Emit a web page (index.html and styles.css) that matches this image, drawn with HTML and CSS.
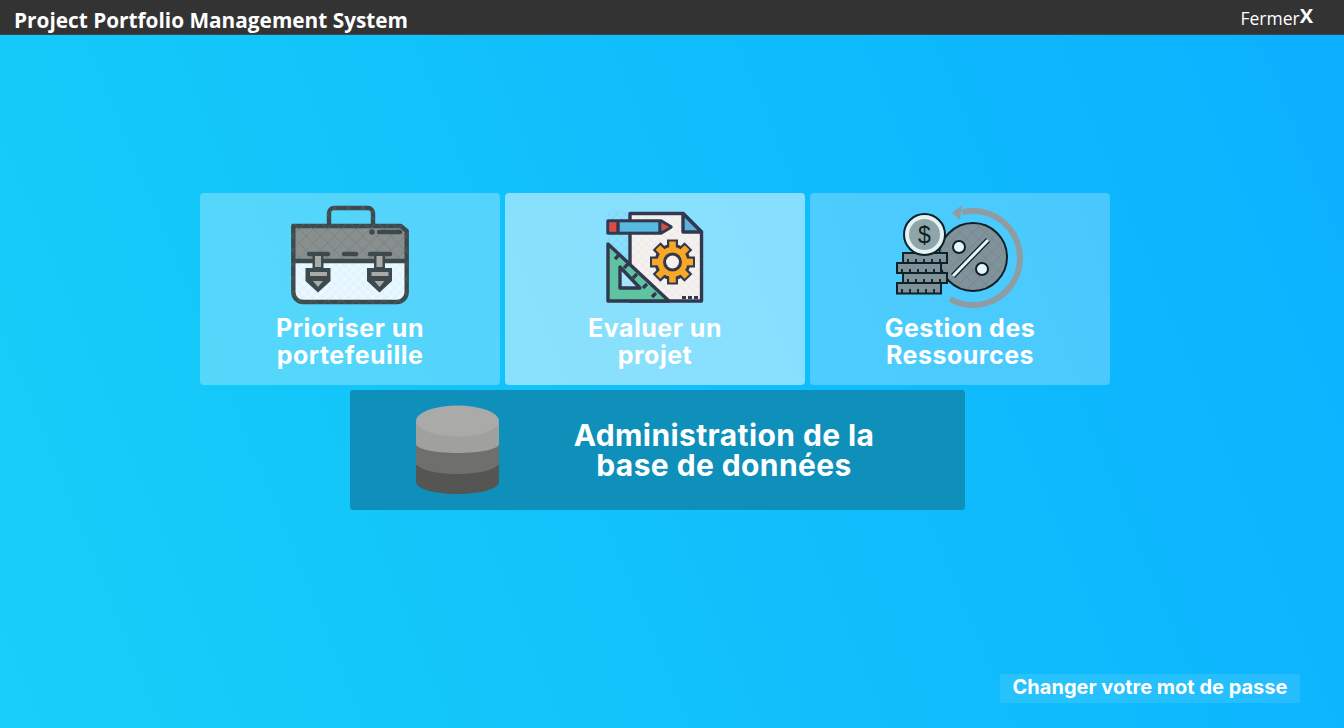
FILE: index.html
```html
<!DOCTYPE html>
<html lang="fr">
<head>
<meta charset="utf-8">
<title>Project Portfolio Management System</title>
<link rel="stylesheet" href="styles.css">
</head>
<body>
<header class="topbar">
  <h1 class="app-title">Project Portfolio Management System</h1>
  <a class="close-link" href="#">Fermer<b class="close-x">X</b></a>
</header>
<main class="content">
  <div class="tiles">
    <a class="tile tile-a" href="#">
      <svg class="tile-icon" viewBox="0 0 140 110" aria-hidden="true">
        <defs>
          <pattern id="hatchDark" width="10" height="10" patternUnits="userSpaceOnUse" patternTransform="rotate(45)">
            <path d="M0 0H10M0 0V10" stroke="#7a6c6c" stroke-width="1.200" opacity=".7" fill="none"/>
          </pattern>
          <pattern id="hatchLight" width="6.500" height="6.500" patternUnits="userSpaceOnUse" patternTransform="rotate(45)">
            <path d="M0 0H6.500M0 0V6.500" stroke="#ffffff" stroke-width="1" fill="none"/>
          </pattern>
          <pattern id="hatchStroke" width="10" height="10" patternUnits="userSpaceOnUse" patternTransform="rotate(45)">
            <path d="M0 0H10M0 0V10" stroke="#5f6b6c" stroke-width="1" fill="none"/>
          </pattern>
        </defs>
        <g transform="translate(5 0)">
          <path class="bc-line" d="M44 26V13a5 5 0 0 1 5-5h34a5 5 0 0 1 5 5v13"/>
          <path fill="#e2f5fe" d="M8 60h114v32a10 10 0 0 1-10 10H18a10 10 0 0 1-10-10z"/>
          <path fill="url(#hatchLight)" d="M8 60h114v32a10 10 0 0 1-10 10H18a10 10 0 0 1-10-10z"/>
          <path fill="#88908f" d="M8 26h108l6 5v30H8z"/>
          <path fill="url(#hatchDark)" d="M8 26h108l6 5v30H8z"/>
          <path class="bc-line" d="M8.300 61V92a10 10 0 0 0 10 10h93.400a10 10 0 0 0 10-10V31l-6-5H8.300zM8.300 61H122"/>
          <path class="bc-stroke" d="M44 26V13a5 5 0 0 1 5-5h34a5 5 0 0 1 5 5v13M8.300 61V92a10 10 0 0 0 10 10h93.400a10 10 0 0 0 10-10V31l-6-5H8.300z"/>
          <path class="bc-line" d="M59 54h12M24 54h19M85 54h20M94 32h21"/>
          <circle cx="87" cy="32" r="2.800" fill="#3c4a4d"/>
          <path class="bc-fill" d="M27.500 55h11v13h7v13l-12.500 11.500L20.500 81V68h7z"/>
          <path fill="#a9a9a9" d="M25 72h17v4H25zM30 56h6v11h-6zM28 81h10l-5 6z"/>
          <path class="bc-fill" d="M89 55h11v13h7v13L94.500 92.500 82 81V68h7z"/>
          <path fill="#a9a9a9" d="M86.500 72h17v4h-17zM91.500 56h6v11h-6zM89.500 81h10l-5 6z"/>
        </g>
      </svg>
      <span class="tile-label">Prioriser un<br>portefeuille</span>
    </a>
    <a class="tile tile-b" href="#">
      <svg class="tile-icon" viewBox="0 0 140 110" aria-hidden="true">
        <defs>
          <pattern id="hatchPaper" width="6" height="6" patternUnits="userSpaceOnUse" patternTransform="rotate(45)">
            <path d="M0 0H6M0 0V6" stroke="#d9e9ee" stroke-width="1" fill="none"/>
          </pattern>
          <pattern id="hatchFaint" width="6" height="6" patternUnits="userSpaceOnUse" patternTransform="rotate(45)">
            <path d="M0 0H6M0 0V6" stroke="#79cbe8" stroke-width="1" fill="none"/>
          </pattern>
        </defs>
        <g transform="translate(15 5)">
          <path fill="url(#hatchFaint)" d="M8 6H30V56L8 38z"/>
          <path class="ev-line" fill="#f7f0ed" d="M30 8.500H83L101.500 27V96H30z"/>
          <path fill="url(#hatchPaper)" d="M32 10.500H82L100 28V94H32z"/>
          <path class="ev-line" fill="#5bb3dc" d="M83 8.500V27H101.500z"/>
          <path class="ev-line" fill="#8de0fd" d="M8 16H61L71 22 61 28H8z"/>
          <path fill="#58b9e2" d="M19 17.500H60V26.500H19z"/>
          <path fill="#e2483d" d="M9.500 17.500H18V26.500H9.500zM62 18L69 22 62 26z"/>
          <path class="ev-line" fill="none" d="M18 16V28M60 16V28"/>
          <path class="ev-line" fill="#5fc3a2" d="M8 39V96H69z"/>
          <path class="ev-line" fill="#a4e6fb" d="M20 62V83H40z"/>
          <path class="ev-line" fill="none" d="M19 50l-4 4M28 59l-4 4M37 69l-4 4M47 79l-4 4M56 88l-4 4"/>
          <g transform="translate(72.500 57)">
            <rect class="gear-dark" x="-5.500" y="-22.500" width="11" height="45"/>
            <rect class="gear-dark" x="-5.500" y="-22.500" width="11" height="45" transform="rotate(45)"/>
            <rect class="gear-dark" x="-5.500" y="-22.500" width="11" height="45" transform="rotate(90)"/>
            <rect class="gear-dark" x="-5.500" y="-22.500" width="11" height="45" transform="rotate(135)"/>
            <circle class="gear-dark" r="18"/>
            <rect class="gear-fill" x="-3.300" y="-20.500" width="6.600" height="41"/>
            <rect class="gear-fill" x="-3.300" y="-20.500" width="6.600" height="41" transform="rotate(45)"/>
            <rect class="gear-fill" x="-3.300" y="-20.500" width="6.600" height="41" transform="rotate(90)"/>
            <rect class="gear-fill" x="-3.300" y="-20.500" width="6.600" height="41" transform="rotate(135)"/>
            <circle class="gear-fill" r="15"/>
            <circle class="gear-dark" r="9.500"/>
            <circle r="6.500" fill="#f7f0ed"/>
          </g>
          <path d="M82 91h4v3h-4zM88 91h4v3h-4zM94 91h4v3h-4z" fill="#33384f"/>
        </g>
      </svg>
      <span class="tile-label">Evaluer un<br>projet</span>
    </a>
    <a class="tile tile-c" href="#">
      <svg class="tile-icon" viewBox="0 0 140 110" aria-hidden="true">
        <defs>
          <pattern id="hatchRed" width="9" height="9" patternUnits="userSpaceOnUse" patternTransform="rotate(45)">
            <path d="M0 0H9M0 0V9" stroke="#8d7275" stroke-width="1.200" opacity=".8" fill="none"/>
          </pattern>
        </defs>
        <path d="M72 12.300A47 47 0 1 1 60 99" fill="none" stroke="#8f9da2" stroke-width="6"/>
        <path d="M62 13L72 5 70 20z" fill="#8f9da2"/>
        <circle cx="83" cy="57" r="34" fill="#7e949c" stroke="#0f2026" stroke-width="2"/>
        <circle cx="83" cy="57" r="33" fill="url(#hatchRed)"/>
        <path d="M98 40L63 76" stroke="#0f2026" stroke-width="5.500" fill="none"/>
        <path d="M98 40L63 76" stroke="#e6f6fa" stroke-width="3" fill="none"/>
        <circle cx="69" cy="47" r="6" fill="#e6f6fa" stroke="#0f2026" stroke-width="2"/>
        <circle cx="92" cy="69" r="6" fill="#e6f6fa" stroke="#0f2026" stroke-width="2"/>
        <g class="coin-row">
          <rect x="13" y="53" width="44" height="10"/>
          <path d="M18 63v-4M26 63v-4M34 63v-4M42 63v-4M50 63v-4"/>
          <rect x="7" y="63" width="44" height="10"/>
          <path d="M12 73v-4M20 73v-4M28 73v-4M36 73v-4M44 73v-4"/>
          <rect x="13" y="73" width="44" height="10"/>
          <path d="M18 83v-4M26 83v-4M34 83v-4M42 83v-4M50 83v-4"/>
          <rect x="7" y="83" width="44" height="10.500"/>
          <path d="M12 93v-4M20 93v-4M28 93v-4M36 93v-4M44 93v-4"/>
        </g>
        <circle cx="34.500" cy="34.500" r="20.500" fill="#e4f2f4" stroke="#0f2026" stroke-width="2"/>
        <circle cx="34.500" cy="34.500" r="15.500" fill="#8fa6a9"/>
        <text class="coin-sign" x="34.500" y="42.500">$</text>
      </svg>
      <span class="tile-label">Gestion des<br>Ressources</span>
    </a>
    <a class="tile-wide" href="#">
      <svg class="db-icon" viewBox="0 0 84 90" aria-hidden="true">
        <path fill="#555554" d="M0 60H83V77C83 84 64 89 41.500 89S0 84 0 77z"/>
        <path fill="#6f6f6d" d="M0 38H83V57C83 64 64 69 41.500 69S0 64 0 57z"/>
        <path fill="#a0a09e" d="M0 16H83V39C83 44 64 48 41.500 48S0 44 0 39z"/>
        <ellipse cx="41.500" cy="16" rx="41.500" ry="15.500" fill="#aaaaa8"/>
      </svg>
      <span class="wide-label">Administration de la<br>base de données</span>
    </a>
  </div>
  <a class="password-link" href="#">Changer votre mot de passe</a>
</main>
</body>
</html>
```
FILE: styles.css
```css
* { box-sizing: border-box; }
html, body { height: 100%; }
body {
  margin: 0;
  overflow: hidden;
  display: flex;
  flex-direction: column;
  font-family: "Inter", "Liberation Sans", sans-serif;
  background: linear-gradient(68deg, #17cff8 0%, #0bb0ff 100%);
  color: #fff;
}
a { color: #fff; text-decoration: none; }

.topbar {
  height: 35px;
  flex: none;
  display: flex;
  justify-content: space-between;
  background: #333;
  border-bottom: 1px solid #3b4650;
  padding: 0 31px 0 14px;
  font-family: "Open Sans", "Liberation Sans", sans-serif;
}
.app-title {
  margin: 0;
  font-size: 20.8px;
  font-weight: 700;
  line-height: 41px;
  white-space: nowrap;
}
.close-link {
  font-size: 17.5px;
  line-height: 37px;
}
.close-x {
  font-size: 20px;
  font-weight: 700;
  line-height: 30px;
  vertical-align: 2px;
}

.content {
  flex: 1;
  display: flex;
  flex-direction: column;
  padding-top: 158px;
}
.tiles {
  width: 910px;
  margin-left: 200px;
  display: grid;
  grid-template-columns: repeat(3, 300px);
  gap: 5px;
}
.tile {
  height: 192px;
  border-radius: 4px;
  padding-top: 7px;
  display: flex;
  flex-direction: column;
  align-items: center;
}
.tile-a { background: rgba(255, 255, 255, .28); }
.tile-b { background: rgba(255, 255, 255, .5); }
.tile-c { background: rgba(255, 255, 255, .25); }
.tile-icon {
  width: 140px;
  height: 110px;
  flex: none;
}
.tile-label {
  margin-top: 5px;
  font-size: 25px;
  font-weight: 700;
  line-height: 27px;
  letter-spacing: .5px;
  text-align: center;
}
.tile-wide {
  grid-column: 1 / -1;
  width: 615px;
  height: 120px;
  margin-left: 150px;
  border-radius: 3px;
  background: #0f90ba;
  display: flex;
  align-items: center;
  padding: 0 17px 0 66px;
}
.db-icon {
  width: 84px;
  height: 90px;
  flex: none;
}
.wide-label {
  flex: 1;
  font-size: 30px;
  font-weight: 700;
  line-height: 30px;
  letter-spacing: .4px;
  text-align: center;
}
.password-link {
  margin-top: auto;
  margin-bottom: 25px;
  margin-right: 44px;
  align-self: flex-end;
  width: 300px;
  height: 29px;
  border-radius: 3px;
  background: rgba(255, 255, 255, .1);
  font-size: 20px;
  font-weight: 700;
  line-height: 27px;
  text-align: center;
}

.bc-line { fill: none; stroke: #3c4a4d; stroke-width: 4.4; stroke-linejoin: round; stroke-linecap: round; }
.bc-stroke { fill: none; stroke: url(#hatchStroke); stroke-width: 4.4; }
.bc-fill { fill: #3c4a4d; }
.ev-line { stroke: #33384f; stroke-width: 3.4; stroke-linejoin: round; }
.gear-dark { fill: #33384f; }
.gear-fill { fill: #f9a826; }
.coin-row rect { fill: #7f9199; stroke: #0f2026; stroke-width: 2; }
.coin-row path { fill: none; stroke: #0f2026; stroke-width: 1.8; }
.coin-sign {
  font-family: "Liberation Sans", sans-serif;
  font-size: 23px;
  fill: #0f2026;
  text-anchor: middle;
}
```
